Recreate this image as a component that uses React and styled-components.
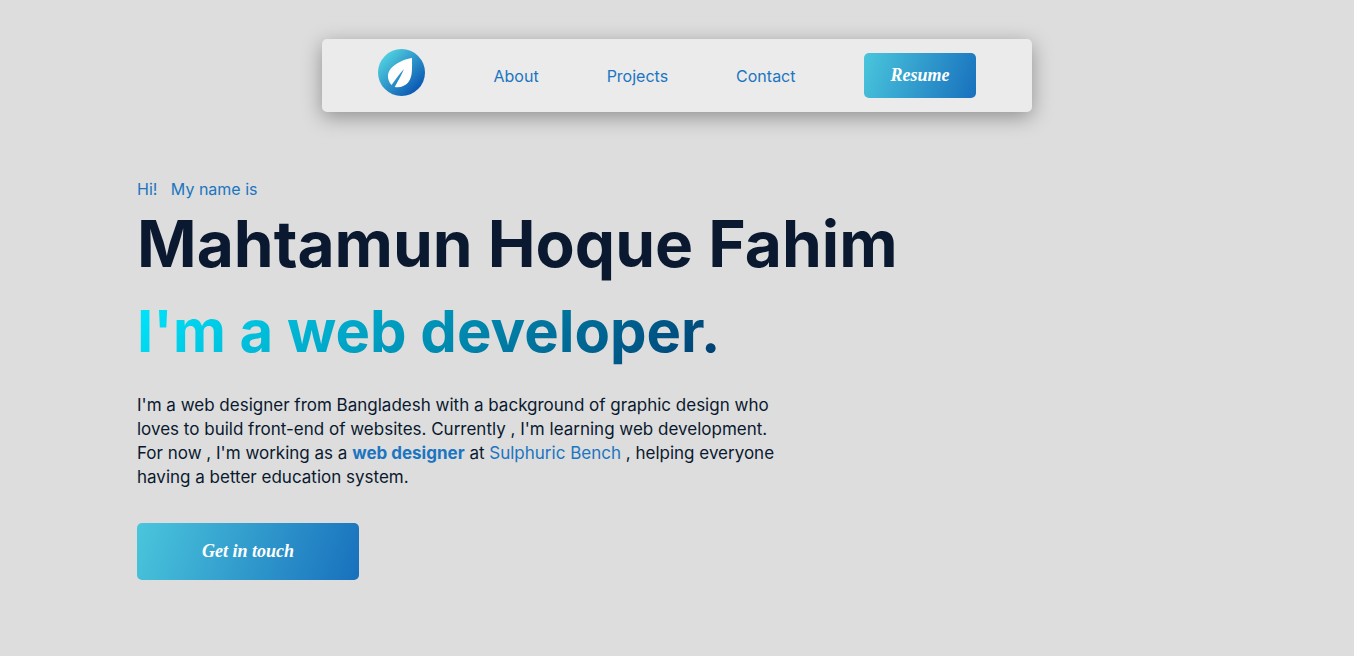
import React from "react";
import styled, { createGlobalStyle } from "styled-components";

const GlobalStyle = createGlobalStyle`
  * { box-sizing: border-box; }
  body {
    margin: 0;
    background: #dddddd;
    color: #0a192f;
    font-family: Inter, "Open Sans", sans-serif;
    font-size: 16px;
    line-height: 24px;
  }
  h1, h2, p { margin: 0; }
`;

const Page = styled.div`
  padding: 39px 24px 76px;
`;

const NavBar = styled.header`
  display: flex;
  align-items: center;
  justify-content: space-between;
  max-width: 710px;
  margin: 0 auto;
  padding: 10px 56px 14px;
  border-radius: 5px;
  background: #ebebeb;
  box-shadow: 0 5px 20px rgba(0, 0, 0, 0.35);
`;

const LogoLink = styled.a`
  display: block;
  height: 49px;
`;

const NavLinks = styled.nav`
  display: flex;
  gap: 68px;
  padding-top: 4px;
`;

const TextLink = styled.a`
  color: #1b75c1;
  text-decoration: none;
`;

const GradientButton = styled.button`
  display: block;
  width: ${({ $wide }) => ($wide ? 222 : 112)}px;
  height: ${({ $wide }) => ($wide ? 57 : 45)}px;
  margin-top: ${({ $top }) => $top}px;
  padding: 0;
  border: 0;
  border-radius: 5px;
  background: linear-gradient(110deg, #4ac6dc, #1870bd);
  color: #ffffff;
  font: italic bold 18px "Liberation Serif", serif;
  cursor: pointer;
`;

const Hero = styled.main`
  max-width: 1080px;
  margin: 0 auto;
  padding-top: 65px;
`;

const Greeting = styled.p`
  color: #1b75c1;
`;

const Name = styled.h1`
  font-size: 64px;
  line-height: 86px;
  font-weight: 700;
`;

const Role = styled.h2`
  width: fit-content;
  background: linear-gradient(135deg, #00eaff, #003a6e);
  background-clip: text;
  -webkit-background-clip: text;
  color: transparent;
  font-size: 58px;
  line-height: 88px;
  font-weight: 700;
`;

const Bio = styled.p`
  margin-top: 18px;
  font-size: 17px;
`;

const Strong = styled.strong`
  color: #1b75c1;
  font-weight: 700;
`;

function Logo() {
  return (
    <svg width="47" height="47" viewBox="0 0 47 47" aria-hidden="true">
      <defs>
        <linearGradient id="logo-fill" x1="0.12" y1="0.12" x2="0.86" y2="0.86">
          <stop offset="0" stopColor="#52d3e0" />
          <stop offset="1" stopColor="#0b57b3" />
        </linearGradient>
      </defs>
      <circle cx="23.5" cy="23.5" r="23.5" fill="url(#logo-fill)" />
      <path
        d="M34 9C27 9.500 17 14.500 12.500 20C8.500 25 9.500 31.500 13.500 36C17.500 30.500 21 25.500 26 20C23.500 26 20 32 16.700 38C22 39 27.500 37 30.500 33C34.800 27.500 34 19 34 9Z"
        fill="#ffffff"
      />
    </svg>
  );
}

export default function App() {
  return (
    <>
      <GlobalStyle />
      <Page>
        <NavBar>
          <LogoLink href="#home" aria-label="Home">
            <Logo />
          </LogoLink>
          <NavLinks>
            <TextLink href="#about">About</TextLink>
            <TextLink href="#projects">Projects</TextLink>
            <TextLink href="#contact">Contact</TextLink>
          </NavLinks>
          <GradientButton type="button" $top={4}>Resume</GradientButton>
        </NavBar>
        <Hero>
          <Greeting>{"Hi!\u00a0\u00a0 My name is"}</Greeting>
          <Name>Mahtamun Hoque Fahim</Name>
          <Role>I'm a web developer.</Role>
          <Bio>
            I'm a web designer from Bangladesh with a background of graphic design who<br />
            loves to build front-end of websites. Currently , I'm learning web development.<br />
            For now , I'm working as a <Strong>web designer</Strong> at{" "}
            <TextLink href="#sulphuric-bench">Sulphuric Bench</TextLink> , helping everyone<br />
            having a better education system.
          </Bio>
          <GradientButton type="button" $wide $top={34}>Get in touch</GradientButton>
        </Hero>
      </Page>
    </>
  );
}
